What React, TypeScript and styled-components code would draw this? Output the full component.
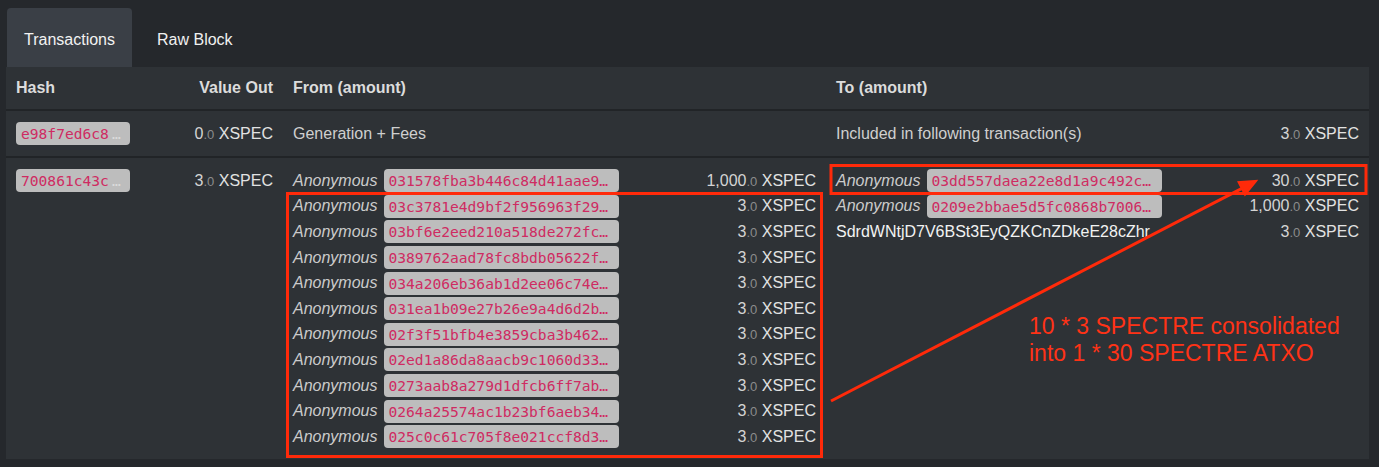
import React from "react";
import styled, { createGlobalStyle } from "styled-components";

const Global = createGlobalStyle`
  html, body { margin: 0; padding: 0; }
  body {
    background: #25282c;
    font-family: "Liberation Sans", Arial, Helvetica, sans-serif;
    font-size: 16px;
    color: #d2d2d2;
  }
`;

const Page = styled.div`
  position: relative;
  width: 1379px;
  height: 467px;
  box-sizing: border-box;
  padding: 8px 10px 8px 6px;
  display: flex;
  flex-direction: column;
  overflow: hidden;
`;

const Tabs = styled.nav`
  display: flex;
  gap: 8px;
  height: 59px;
  padding-left: 1px;
`;

const Tab = styled.div<{ $active?: boolean }>`
  display: flex;
  align-items: center;
  padding: 5px 17px 0;
  border-radius: 4px 4px 0 0;
  background: ${(p) => (p.$active ? "#3a3f46" : "transparent")};
  color: ${(p) => (p.$active ? "#f2f2f2" : "#f0f0f0")};
  font-size: 16px;
`;

const Panel = styled.div`
  background: #2e3236;
  flex: 1;
  display: flex;
  flex-direction: column;
`;

const Row = styled.div<{ $head?: boolean; $top?: boolean }>`
  display: grid;
  grid-template-columns: 160px 117px 543px 543px;
  align-items: ${(p) => (p.$top ? "start" : "center")};
  height: ${(p) => (p.$head ? "42px" : p.$top ? "auto" : "45px")};
  padding: ${(p) => (p.$top ? "10px 0 9px" : "0")};
  border-bottom: ${(p) => (p.$top ? "none" : "2px solid #212427")};
  font-weight: ${(p) => (p.$head ? "bold" : "normal")};
  color: ${(p) => (p.$head ? "#dcdcdc" : "#cfcfcf")};
  box-sizing: content-box;
`;

const Cell = styled.div<{ $right?: boolean }>`
  padding: 0 10px;
  display: flex;
  flex-direction: column;
  align-items: ${(p) => (p.$right ? "flex-end" : "stretch")};
  min-width: 0;
`;

const Line = styled.div`
  height: 25.6px;
  display: flex;
  align-items: center;
  white-space: nowrap;
`;

const Anon = styled.span`
  font-style: italic;
  color: #cbcbcb;
  margin-right: 6px;
`;

const Address = styled.span`
  color: #f2f2f2;
`;

const Pill = styled.code<{ $w: number }>`
  display: inline-flex;
  align-items: center;
  box-sizing: border-box;
  width: ${(p) => p.$w}px;
  height: 23px;
  padding: 0 5px;
  border-radius: 4px;
  background: #bdbdbd;
  color: #cf2b62;
  font-family: "DejaVu Sans Mono", "Liberation Mono", monospace;
  font-size: 14.6px;
  white-space: nowrap;
  overflow: hidden;
`;

const Fade = styled.span`
  color: #dadada;
  margin-left: 3px;
`;

const AmountWrap = styled.span`
  margin-left: auto;
  color: #d4d4d4;
`;

const Decimal = styled.span`
  font-size: 13px;
  color: #8c8c8c;
`;

const Unit = styled.span`
  color: #e2e2e2;
`;

const Overlay = styled.svg`
  position: absolute;
  left: 0;
  top: 0;
  pointer-events: none;
`;

const Note = styled.div`
  position: absolute;
  left: 1029px;
  top: 313px;
  color: #ff3216;
  font-size: 23px;
  line-height: 27px;
  white-space: nowrap;
`;

const Amount = ({ v }: { v: string }) => (
  <AmountWrap>
    {v}
    <Decimal>.0</Decimal> <Unit>XSPEC</Unit>
  </AmountWrap>
);

const fromRows: [string, string][] = [
  ["031578fba3b446c84d41aae9…", "1,000"],
  ["03c3781e4d9bf2f956963f29…", "3"],
  ["03bf6e2eed210a518de272fc…", "3"],
  ["0389762aad78fc8bdb05622f…", "3"],
  ["034a206eb36ab1d2ee06c74e…", "3"],
  ["031ea1b09e27b26e9a4d6d2b…", "3"],
  ["02f3f51bfb4e3859cba3b462…", "3"],
  ["02ed1a86da8aacb9c1060d33…", "3"],
  ["0273aab8a279d1dfcb6ff7ab…", "3"],
  ["0264a25574ac1b23bf6aeb34…", "3"],
  ["025c0c61c705f8e021ccf8d3…", "3"],
];

const toRows: [string, string][] = [
  ["03dd557daea22e8d1a9c492c…", "30"],
  ["0209e2bbae5d5fc0868b7006…", "1,000"],
];

export default function App() {
  return (
    <>
      <Global />
      <Page>
        <Tabs>
          <Tab $active>Transactions</Tab>
          <Tab>Raw Block</Tab>
        </Tabs>
        <Panel>
          <Row $head>
            <Cell>Hash</Cell>
            <Cell $right>Value Out</Cell>
            <Cell>From (amount)</Cell>
            <Cell>To (amount)</Cell>
          </Row>
          <Row>
            <Cell>
              <Line>
                <Pill $w={114}>
                  e98f7ed6c8<Fade>…</Fade>
                </Pill>
              </Line>
            </Cell>
            <Cell $right>
              <Line>
                <Amount v="0" />
              </Line>
            </Cell>
            <Cell>
              <Line>Generation + Fees</Line>
            </Cell>
            <Cell>
              <Line>
                Included in following transaction(s)
                <Amount v="3" />
              </Line>
            </Cell>
          </Row>
          <Row $top>
            <Cell>
              <Line>
                <Pill $w={114}>
                  700861c43c<Fade>…</Fade>
                </Pill>
              </Line>
            </Cell>
            <Cell $right>
              <Line>
                <Amount v="3" />
              </Line>
            </Cell>
            <Cell>
              {fromRows.map(([h, v]) => (
                <Line key={h}>
                  <Anon>Anonymous</Anon>
                  <Pill $w={235}>{h}</Pill>
                  <Amount v={v} />
                </Line>
              ))}
            </Cell>
            <Cell>
              {toRows.map(([h, v]) => (
                <Line key={h}>
                  <Anon>Anonymous</Anon>
                  <Pill $w={235}>{h}</Pill>
                  <Amount v={v} />
                </Line>
              ))}
              <Line>
                <Address>SdrdWNtjD7V6BSt3EyQZKCnZDkeE28cZhr</Address>
                <Amount v="3" />
              </Line>
            </Cell>
          </Row>
        </Panel>
        <Overlay width="1379" height="467" viewBox="0 0 1379 467">
          <rect x="287.5" y="193.5" width="534" height="263" fill="none" stroke="#ff2a0a" strokeWidth="3" />
          <rect x="831" y="165.5" width="535" height="28" fill="none" stroke="#ff2a0a" strokeWidth="3" />
          <line x1="831" y1="401" x2="1242" y2="188.4" stroke="#ff2a0a" strokeWidth="3" />
          <polygon points="1256,181 1245,194.6 1238.6,182.2" fill="#ff2a0a" stroke="#ff2a0a" strokeWidth="2" strokeLinejoin="miter" />
        </Overlay>
        <Note>
          10 * 3 SPECTRE consolidated
          <br />
          into 1 * 30 SPECTRE ATXO
        </Note>
      </Page>
    </>
  );
}
